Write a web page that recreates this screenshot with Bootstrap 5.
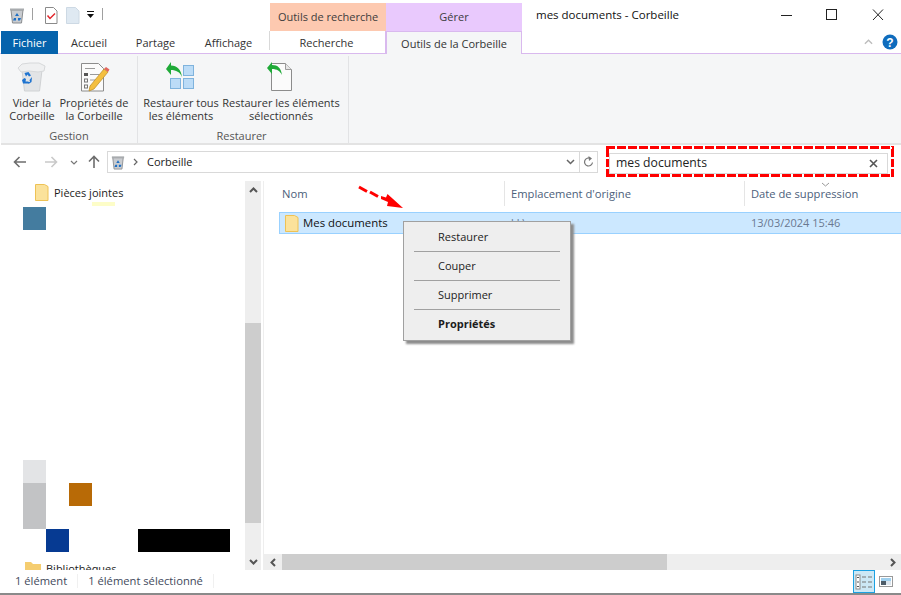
<!DOCTYPE html>
<html lang="fr">
<head>
<meta charset="utf-8">
<title>mes documents - Corbeille</title>
<link href="https://cdn.jsdelivr.net/npm/bootstrap@5.3.0/dist/css/bootstrap.min.css" rel="stylesheet">
<style>
html,body{height:100%;overflow:hidden;background:#fff}
body{font-family:"Open Sans","Noto Sans",sans-serif;font-size:11px;color:#1c1c1c;line-height:1.2}
.win{width:901px;height:595px;display:flex;flex-direction:column;position:relative;overflow:hidden}
.titlerow{height:31px;display:flex;flex:none}
.qat{width:270px;display:flex;align-items:flex-start;padding:7px 0 0 9px;flex:none}
.qsep{width:1px;height:12px;background:#a0a0a0;margin-top:1px}
.q-sep1{margin-left:7px}
.q-doc{margin-left:11px}
.q-pale{margin-left:8px}
.q-dd{margin:4px 0 0 6px}
.q-sep2{margin-left:7px}
.ctx{height:28px;margin-top:3px;display:flex;align-items:center;justify-content:center;color:#3d3d3d}
.ctx-a{width:116px;background:#fdc9b0}
.ctx-b{width:136px;background:#e9c9fd}
.wtitle{margin-left:14px;padding-top:8px;font-size:11.5px;color:#111;flex:1}
.wbtns{display:flex;padding:9px 17px 0 0}
.wbtns svg{display:block}
.tabrow{height:23px;display:flex;align-items:stretch;border-bottom:1px solid #d9b9ee;flex:none;position:relative}
.rtab{display:flex;align-items:center;justify-content:center;color:#333;padding-top:1px}
.tab-file{width:57px;margin-left:1px;background:#0563ac;color:#fff;margin-bottom:-1px}
.rtab-1{width:62px}.rtab-2{width:71px}.rtab-3{width:75px}
.tabgap{width:4px;border-right:1px solid #d9d9d9;margin-bottom:3px}
.tab-rech{width:116px;border-right:1px solid #d9b9ee;padding-right:2px}
.tab-cor{width:136px;background:#f5f6f7;border:1px solid #d9b9ee;border-bottom:0;margin-bottom:-1px;position:relative;z-index:1}
.ribright{margin-left:auto;display:flex;align-items:center;gap:9px;padding-right:3px}
.ribbon{height:91px;background:#f5f6f7;border-bottom:2px solid #e3e3e3;display:flex;flex:none;margin-left:1px}
.rgroup{display:flex;flex-direction:column;border-right:1px solid #e2e3e5;margin-top:2px}
.rg-1{width:137px}.rg-2{width:211px}
.rbtns{display:flex;flex:1}
.rbtn{display:flex;flex-direction:column;align-items:center;text-align:center;line-height:13px;color:#333;white-space:nowrap;padding-top:3px}
.rbtn svg{display:block;margin-bottom:1px;height:36px;flex:none}
.rlabel{text-align:center;color:#555;height:17px;line-height:19px}
.rg-2 .rlabel{padding-right:3px}
.b1{width:62px}.b2{width:62px}
.b3{width:86px}.b4{width:114px}
.navrow{height:33px;display:flex;align-items:center;flex:none;position:relative}
.navbtns{width:107px;display:flex;align-items:center;flex:none;padding-top:1px}
.nb-back{margin-left:13px}
.nb-fwd{margin-left:17px}
.nb-drop{margin-left:12px}
.nb-up{margin-left:10px}
.addr{width:491px;height:22px;margin-top:1px;border:1px solid #d9d9d9;display:flex;align-items:center;flex:none}
.ad-bin{margin-left:3px}
.ad-chev{margin-left:8px}
.addr-txt{flex:1;color:#222;padding-left:9px;font-size:11px}
.addr-ref{width:18px;height:100%;border-left:1px solid #d9d9d9;display:flex;align-items:center;justify-content:center}
.srch{width:288px;height:31px;margin-left:8px;padding:6.500px 6px 3.500px 3px;flex:none;
background:
 repeating-linear-gradient(90deg,#f00 0 9px,transparent 9px 11px) top left/100% 3px no-repeat,
 repeating-linear-gradient(90deg,#f00 0 9px,transparent 9px 11px) bottom left/100% 3px no-repeat,
 repeating-linear-gradient(0deg,#f00 0 8px,transparent 8px 10px) top left/3px 100% no-repeat,
 repeating-linear-gradient(0deg,#f00 0 8px,transparent 8px 10px) top right/3px 100% no-repeat}
.srch-in{height:100%;border:1px solid #d9d9d9;display:flex;align-items:center;padding:1px 9px 0 6px;font-size:12.200px;color:#222;justify-content:space-between}
.mainrow{flex:1;display:flex;min-height:0;padding-top:3px}
.tree{width:245px;position:relative;overflow:hidden;flex:none}
.treeitem{position:absolute;display:flex;align-items:center;gap:5px;white-space:nowrap;color:#1c1c1c}
.ti-1{left:35px;top:3px}
.ti-2{left:25px;top:381px}
.ti-2 svg{margin-top:-4px}
.px{position:absolute;width:23px;height:23px}
.px-a{left:23px;top:26px;background:#447c9f}
.px-b{left:23px;top:279px;background:#e3e4e6}
.px-c{left:23px;top:302px;height:46px;background:#c2c3c5}
.px-d{left:69px;top:302px;background:#b86a06}
.px-e{left:46px;top:348px;background:#063a92}
.px-f{left:138px;top:348px;width:92px;background:#000}
.px-g{left:92px;top:21px;height:4px;background:#fdfdc8}
.vscroll{width:16px;background:#eee;display:flex;flex-direction:column;flex:none;align-items:center}
.sarrow{height:17px;display:flex;align-items:center;justify-content:center;flex:none}
.sa-l{width:18px}
.sa-r{width:17px;margin-left:auto}
.vspace-a{height:125px;flex:none}
.vthumb{width:100%;height:200px;background:#cdcdcd;flex:none}
.vspace-b{flex:1}
.pane{flex:1;border-left:1px solid #eee;margin-left:2px;display:flex;flex-direction:column;min-width:0;position:relative}
.thead{height:31px;display:flex;color:#4c607a;flex:none;position:relative;font-size:11.200px}
.th{padding:6px 0 0 6px;height:25px;border-right:1px solid #e5e5e5}
.th-1{width:241px;padding-left:18px}.th-2{width:240px}.th-3{flex:1;border:0}
.sortmark{position:absolute;left:557px;top:1px}
.frow{height:22px;margin-left:15px;background:#cce8ff;border:1px solid #99d1ff;border-right:0;display:flex;align-items:center;flex:none;color:#1c1c1c}
.fname{width:226px;display:flex;align-items:center;gap:4px;padding-left:5px;color:#111;font-size:11.400px}
.floc{width:239px;color:#6a7890;padding-left:5px}
.fdate{padding-left:6px;color:#6a7890}
.pspace{flex:1}
.hscroll{height:16px;background:#eee;display:flex;align-items:center;flex:none}
.hthumb{width:385px;height:100%;background:#cdcdcd}
.statusrow{height:23px;display:flex;align-items:center;flex:none;color:#3f4a5c;padding:0 0 2px 15px;font-size:11.200px}
.stsep{width:1px;height:14px;background:#f0f0f0;margin:0 10px}
.viewbtns{margin-left:auto;display:flex;align-items:center;padding:2px 8px 0 0;gap:4px}
.vb-on{width:22px;height:23px;background:#cce8f5;border:1px solid #1ba1e2;display:flex;align-items:center;justify-content:center}
.botline{height:2px;background:#8a8a8a;flex:none}
.cmenu.dropdown-menu{display:block;position:absolute;left:403px;top:221px;width:168px;height:120px;min-width:0;background:#eee;border:1px solid #a0a0a0;border-radius:0;box-shadow:3px 3px 2px #8c8c8c;padding:2px 0 0;margin:0;font-size:11px;z-index:5}
.cmenu .dropdown-item{padding:0 0 0 34px;height:26px;line-height:26px;font-size:11px;color:#1c1c1c;background:none}
.cmenu .dropdown-divider{margin:1px 10px 0;border-top:1px solid #a0a0a0;opacity:1;height:2px}
.cmenu .cm-bold{font-weight:700}
.arrow{position:absolute;left:358px;top:185px;z-index:4}
</style>
</head>
<body>
<div class="win">
  <div class="titlerow">
    <div class="qat">
      <svg width="16" height="17" viewBox="0 0 16 17"><path d="M2 3h12l-1.500 13h-9z" fill="#c9ccd0" stroke="#8a8d90"/><rect x="1" y="1.500" width="14" height="2" fill="#a8abae"/><path d="M8 6l2 3H6zM5 11h2v2.500H4zM9 11h3l-1 2.500H9z" fill="#1f6fc4"/></svg>
      <span class="qsep q-sep1"></span>
      <svg class="q-doc" width="14" height="17" viewBox="0 0 14 17"><path d="M1.500.5h8l3.500 3.500v12.500h-11.500z" fill="#fff" stroke="#8a8a8a"/><path d="M3.500 8.500l2.500 3 5-5" fill="none" stroke="#e2252b" stroke-width="1.500"/></svg>
      <svg class="q-pale" width="14" height="17" viewBox="0 0 14 17"><path d="M.5.500h9l3.500 3.500v12.500h-12.500z" fill="#dfe9f2" stroke="#cdd9e4"/></svg>
      <svg class="q-dd" width="9" height="8" viewBox="0 0 9 8"><rect x="1" y="0" width="7" height="1" fill="#111"/><path d="M1 3h7L4.500 7z" fill="#111"/></svg>
      <span class="qsep q-sep2"></span>
    </div>
    <div class="ctx ctx-a">Outils de recherche</div>
    <div class="ctx ctx-b">Gérer</div>
    <div class="wtitle">mes documents - Corbeille</div>
    <div class="wbtns">
      <svg width="46" height="12" viewBox="0 0 46 12"><rect x="1" y="6" width="11" height="1" fill="#222"/></svg>
      <svg width="46" height="12" viewBox="0 0 46 12"><rect x="0.500" y="0.500" width="10" height="10" fill="none" stroke="#222"/></svg>
      <svg width="12" height="12" viewBox="0 0 12 12"><path d="M1 .5l10 10.500M11 .5L1 11" stroke="#222" fill="none"/></svg>
    </div>
  </div>
  <div class="tabrow">
    <div class="rtab tab-file">Fichier</div>
    <div class="rtab rtab-1">Accueil</div>
    <div class="rtab rtab-2">Partage</div>
    <div class="rtab rtab-3">Affichage</div>
    <div class="tabgap"></div>
    <div class="rtab tab-rech">Recherche</div>
    <div class="rtab tab-cor">Outils de la Corbeille</div>
    <div class="ribright">
      <svg width="9" height="6" viewBox="0 0 10 6"><path d="M1 5l4-4 4 4" fill="none" stroke="#bcbcbc" stroke-width="1.500"/></svg>
      <svg width="16" height="16" viewBox="0 0 16 16"><circle cx="8" cy="8" r="7.500" fill="#0f6cbd"/><text x="8" y="12.500" text-anchor="middle" font-size="12" font-weight="700" fill="#fff" font-family="Liberation Sans">?</text></svg>
    </div>
  </div>
  <div class="ribbon">
    <div class="rgroup rg-1">
      <div class="rbtns">
        <div class="rbtn b1">
          <svg width="34" height="36" viewBox="0 0 34 36"><path d="M7 11h20l-2.500 21H9.500z" fill="#e2e4e6" stroke="#d0d2d4"/><path d="M3 9l4-4 8-1 9 0 6 3-1 5-6 1-9-1-8 1z" fill="#eff0f1" stroke="#d6d8da"/><path d="M9.500 14l4-1 2.500 3.500-2 1-1.500-2-1.500 2zM7 21l2.500-2 1.500 1-.5 2.500h3v2H8zM17 18l-.5 5-3 2v-2h1.500l-.5-2z" fill="#1f74d0"/></svg>
          <span>Vider la<br>Corbeille</span>
        </div>
        <div class="rbtn b2">
          <svg width="34" height="36" viewBox="0 0 34 36"><path d="M4.500 4.500h17l5 5v22.500h-22z" fill="#fbfbfb" stroke="#8c8c8c"/><path d="M8 9.500h10M13 15.500h9M13 21h6M13 27h4" stroke="#9a9a9a" fill="none"/><rect x="7" y="14" width="4" height="3" fill="#555"/><rect x="7.500" y="20" width="3" height="3" fill="none" stroke="#777"/><rect x="7.500" y="26" width="3" height="3" fill="none" stroke="#777"/><path d="M13 27l14-17 4 3-14 17-5 2z" fill="#f4bf3f" stroke="#b98b25" stroke-width=".7"/><path d="M27 10l2-2 3.500 2.500-1.500 2.500z" fill="#e2655d"/></svg>
          <span>Propriétés de<br>la Corbeille</span>
        </div>
      </div>
      <div class="rlabel">Gestion</div>
    </div>
    <div class="rgroup rg-2">
      <div class="rbtns">
        <div class="rbtn b3">
          <svg width="34" height="36" viewBox="0 0 34 36"><rect x="19.500" y="6.500" width="10" height="10" fill="#bcdcf7" stroke="#7fb3dd"/><rect x="6.500" y="19.500" width="10" height="10" fill="#bcdcf7" stroke="#7fb3dd"/><rect x="19.500" y="19.500" width="10" height="10" fill="#bcdcf7" stroke="#7fb3dd"/><path d="M2 10L7 3v3.500c6 0 10 4 11 11.500-2-5-6-7-11-7v5z" fill="#1faa38"/></svg>
          <span>Restaurer tous<br>les éléments</span>
        </div>
        <div class="rbtn b4">
          <svg width="34" height="36" viewBox="0 0 34 36"><path d="M7.500 4.500h14l6 6v21h-20z" fill="#fbfbfb" stroke="#8c8c8c"/><path d="M21.500 4.500v6h6" fill="#e6e6e6" stroke="#9c9c9c"/><path d="M3 9l5-6v3c6 0 9 3 10 10-2-4-5-6-10-6v5z" fill="#1faa38"/></svg>
          <span>Restaurer les éléments<br>sélectionnés</span>
        </div>
      </div>
      <div class="rlabel">Restaurer</div>
    </div>
  </div>
  <div class="navrow">
    <div class="navbtns">
      <svg class="nb-back" width="14" height="12" viewBox="0 0 14 12"><path d="M13 6H2M6.500 1L1.500 6l5 5" fill="none" stroke="#6d6d6d" stroke-width="1.600"/></svg>
      <svg class="nb-fwd" width="14" height="12" viewBox="0 0 14 12"><path d="M1 6h11M7.500 1l5 5-5 5" fill="none" stroke="#c9c9c9" stroke-width="1.600"/></svg>
      <svg class="nb-drop" width="8" height="5" viewBox="0 0 8 5"><path d="M1 1l3 3 3-3" fill="none" stroke="#777" stroke-width="1.200"/></svg>
      <svg class="nb-up" width="12" height="14" viewBox="0 0 12 14"><path d="M6 13V2M1 6.500l5-5 5 5" fill="none" stroke="#6d6d6d" stroke-width="1.600"/></svg>
    </div>
    <div class="addr">
      <svg class="ad-bin" width="14" height="15" viewBox="0 0 16 17"><path d="M2 3h12l-1.500 13h-9z" fill="#c9ccd0" stroke="#8a8d90"/><rect x="1" y="1.500" width="14" height="2" fill="#a8abae"/><path d="M8 6l2 3H6zM5 11h2v2.500H4zM9 11h3l-1 2.500H9z" fill="#1f6fc4"/></svg>
      <svg class="ad-chev" width="5" height="8" viewBox="0 0 5 8"><path d="M1 1l3 3-3 3" fill="none" stroke="#666" stroke-width="1.200"/></svg>
      <span class="addr-txt">Corbeille</span>
      <svg class="me-1" width="9" height="6" viewBox="0 0 9 6"><path d="M1 1l3.500 3.500L8 1" fill="none" stroke="#666" stroke-width="1.500"/></svg>
      <div class="addr-ref"><svg width="11" height="12" viewBox="0 0 11 12"><path d="M9.500 6.500a4 4 0 1 1-2-4" fill="none" stroke="#777" stroke-width="1.200"/><path d="M5.500 0l3.500 2.500L6 5z" fill="#777"/></svg></div>
    </div>
    <div class="srch"><div class="srch-in"><span>mes documents</span><svg width="9" height="9" viewBox="0 0 9 9"><path d="M1 1l7 7M8 1L1 8" stroke="#555" stroke-width="1.600"/></svg></div></div>
  </div>
  <div class="mainrow">
    <div class="tree">
      <div class="treeitem ti-1"><svg width="14" height="17" viewBox="0 0 14 17"><path d="M.5.500h9l3.500 2v14h-12.500z" fill="#fbe29b" stroke="#eec255"/></svg><span>Pièces jointes</span></div>
      <div class="px px-g"></div>
      <div class="px px-a"></div>
      <div class="px px-b"></div>
      <div class="px px-c"></div>
      <div class="px px-d"></div>
      <div class="px px-e"></div>
      <div class="px px-f"></div>
      <div class="treeitem ti-2"><svg width="16" height="9" viewBox="0 0 16 9"><path d="M0 0h6l2 2h8v7H0z" fill="#f5cd70"/></svg><span>Bibliothèques</span></div>
    </div>
    <div class="vscroll">
      <div class="sarrow"><svg width="9" height="6" viewBox="0 0 9 6"><path d="M1 5l3.500-3.500L8 5" fill="none" stroke="#555" stroke-width="2"/></svg></div>
      <div class="vspace-a"></div>
      <div class="vthumb"></div>
      <div class="vspace-b"></div>
      <div class="sarrow"><svg width="9" height="6" viewBox="0 0 9 6"><path d="M1 1l3.500 3.500L8 1" fill="none" stroke="#555" stroke-width="2"/></svg></div>
    </div>
    <div class="pane">
      <div class="thead">
        <div class="th th-1">Nom</div>
        <div class="th th-2">Emplacement d'origine</div>
        <div class="th th-3">Date de suppression</div>
        <svg class="sortmark" width="9" height="5" viewBox="0 0 9 5"><path d="M1 1l3.500 3L8 1" fill="none" stroke="#999"/></svg>
      </div>
      <div class="frow">
        <div class="fname"><svg width="14" height="17" viewBox="0 0 14 17"><path d="M.5.500h9l3.500 2v14h-12.500z" fill="#fbe29b" stroke="#eec255"/></svg><span>Mes documents</span></div>
        <div class="floc">l l \</div>
        <div class="fdate">13/03/2024 15:46</div>
      </div>
      <div class="pspace"></div>
      <div class="hscroll">
        <div class="sarrow sa-l"><svg width="6" height="9" viewBox="0 0 6 9"><path d="M5 1L1.500 4.500 5 8" fill="none" stroke="#555" stroke-width="2"/></svg></div>
        <div class="hthumb"></div>
        <div class="sarrow sa-r"><svg width="6" height="9" viewBox="0 0 6 9"><path d="M1 1l3.500 3.500L1 8" fill="none" stroke="#555" stroke-width="2"/></svg></div>
      </div>
    </div>
  </div>
  <div class="statusrow">
    <span>1 élément</span><span class="stsep"></span><span>1 élément sélectionné</span><span class="stsep"></span>
    <div class="viewbtns">
      <div class="vb-on"><svg width="18" height="16" viewBox="0 0 18 16"><rect x="1" y="1" width="4" height="14" fill="#fff" stroke="#8a8a8a"/><path d="M2 3.500h2M2 8h2M2 12.500h2" stroke="#555"/><path d="M7 3h4M13 3h4M7 8h4M13 8h4M7 13h4M13 13h4" stroke="#777" stroke-width="1.200"/></svg></div>
      <svg width="14" height="11" viewBox="0 0 14 11"><rect x=".5" y=".5" width="13" height="10" fill="#fff" stroke="#999"/><rect x="2" y="2" width="10" height="3" fill="#9fd0ee"/><rect x="2" y="5" width="10" height="4" fill="#dce6ee"/><rect x="2" y="5" width="5" height="4" fill="#4d5c68"/></svg>
    </div>
  </div>
  <div class="botline"></div>

  <svg class="arrow" width="48" height="26" viewBox="0 0 48 26"><path d="M1 2l8 4.500M12 7l8 4.500" stroke="#f00" stroke-width="3" fill="none"/><path d="M23 11l5 1.500 1.500-3.500L45 23l-16-2 1-4-7-3z" fill="#f00"/></svg>

  <div class="cmenu dropdown-menu">
    <a class="dropdown-item" href="#">Restaurer</a>
    <div class="dropdown-divider"></div>
    <a class="dropdown-item" href="#">Couper</a>
    <div class="dropdown-divider"></div>
    <a class="dropdown-item" href="#">Supprimer</a>
    <div class="dropdown-divider"></div>
    <a class="dropdown-item cm-bold" href="#">Propriétés</a>
  </div>
</div>
<script src="https://cdn.jsdelivr.net/npm/bootstrap@5.3.0/dist/js/bootstrap.bundle.min.js"></script>
</body>
</html>
